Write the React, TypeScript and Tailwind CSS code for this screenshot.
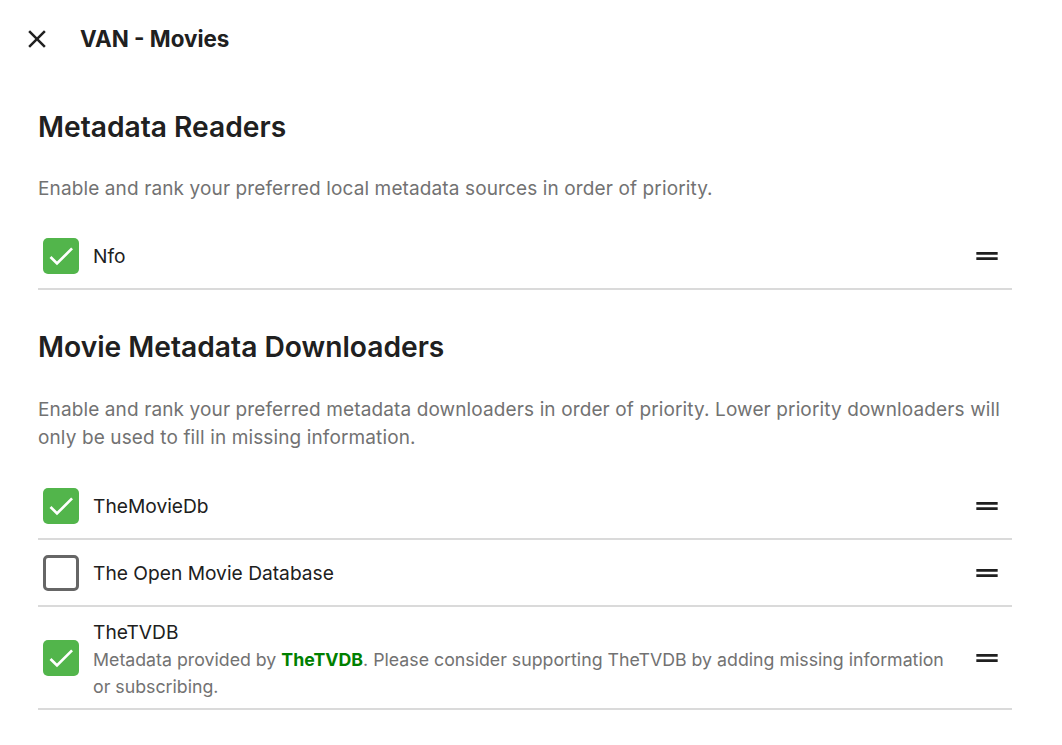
import React from "react"

function CloseIcon() {
  return (
    <svg width="30" height="30" viewBox="0 0 24 24" fill="#202020">
      <path d="M19 6.41L17.59 5 12 10.59 6.41 5 5 6.41 10.59 12 5 17.59 6.41 19 12 13.41 17.59 19 19 17.59 13.41 12z" />
    </svg>
  )
}

function DragHandle() {
  return (
    <svg width="32" height="32" viewBox="0 0 24 24" fill="#202020" className="shrink-0">
      <path d="M20 9H4v2h16V9zM4 15h16v-2H4v2z" />
    </svg>
  )
}

function Check({ checked }: { checked: boolean }) {
  if (!checked) {
    return <div className="w-[36px] h-[36px] shrink-0 rounded-[5px] border-[3px] border-[#666666] bg-white" />
  }
  return (
    <div className="w-[36px] h-[36px] shrink-0 rounded-[5px] bg-[#52b54b] flex items-center justify-center">
      <svg width="32" height="32" viewBox="0 0 24 24" fill="white">
        <path d="M9 16.17L4.83 12l-1.42 1.41L9 19 21 7l-1.41-1.41z" />
      </svg>
    </div>
  )
}

function Row({ checked, name, children }: { checked: boolean; name: string; children?: React.ReactNode }) {
  return (
    <div className="flex items-center border-b-2 border-[#dadada] pl-[5px] pr-[9px] min-h-[67px]">
      <Check checked={checked} />
      <div className={children ? "flex-1 pl-[14px] pr-[20px] pt-[11px] pb-[8px]" : "flex-1 pl-[14px] pr-[20px]"}>
        <div className="text-[19.2px] leading-[28px] text-[#202020]">{name}</div>
        {children}
      </div>
      <DragHandle />
    </div>
  )
}

export default function App() {
  return (
    <div className="min-h-screen bg-white text-[#202020]" style={{ fontFamily: "Inter, 'Noto Sans', sans-serif" }}>
      <div className="h-[77px] flex items-center pl-[22px]">
        <CloseIcon />
        <h1 className="ml-[28px] text-[22.4px] font-bold">VAN - Movies</h1>
      </div>
      <div className="pl-[38px] pr-[50px]">
        <h2 className="mt-[30px] text-[28.2px] leading-[40px] font-semibold">Metadata Readers</h2>
        <p className="mt-[28px] text-[19px] tracking-[0.12px] leading-[28px] text-[#727272]">
          Enable and rank your preferred local metadata sources in order of priority.
        </p>
        <div className="mt-[20px]">
          <Row checked name="Nfo" />
        </div>
        <h2 className="mt-[37px] text-[28.2px] leading-[40px] font-semibold">Movie Metadata Downloaders</h2>
        <p className="mt-[29px] text-[19px] tracking-[0.12px] leading-[28px] text-[#727272]">
          Enable and rank your preferred metadata downloaders in order of priority. Lower priority downloaders will only be used to fill in missing information.
        </p>
        <div className="mt-[21px]">
          <Row checked name="TheMovieDb" />
          <Row checked={false} name="The Open Movie Database" />
          <Row checked name="TheTVDB">
            <div className="text-[17.75px] leading-[27px] text-[#727272]">
              Metadata provided by <span className="font-bold text-[#008000]">TheTVDB</span>. Please consider supporting TheTVDB by adding missing information or subscribing.
            </div>
          </Row>
        </div>
      </div>
    </div>
  )
}
